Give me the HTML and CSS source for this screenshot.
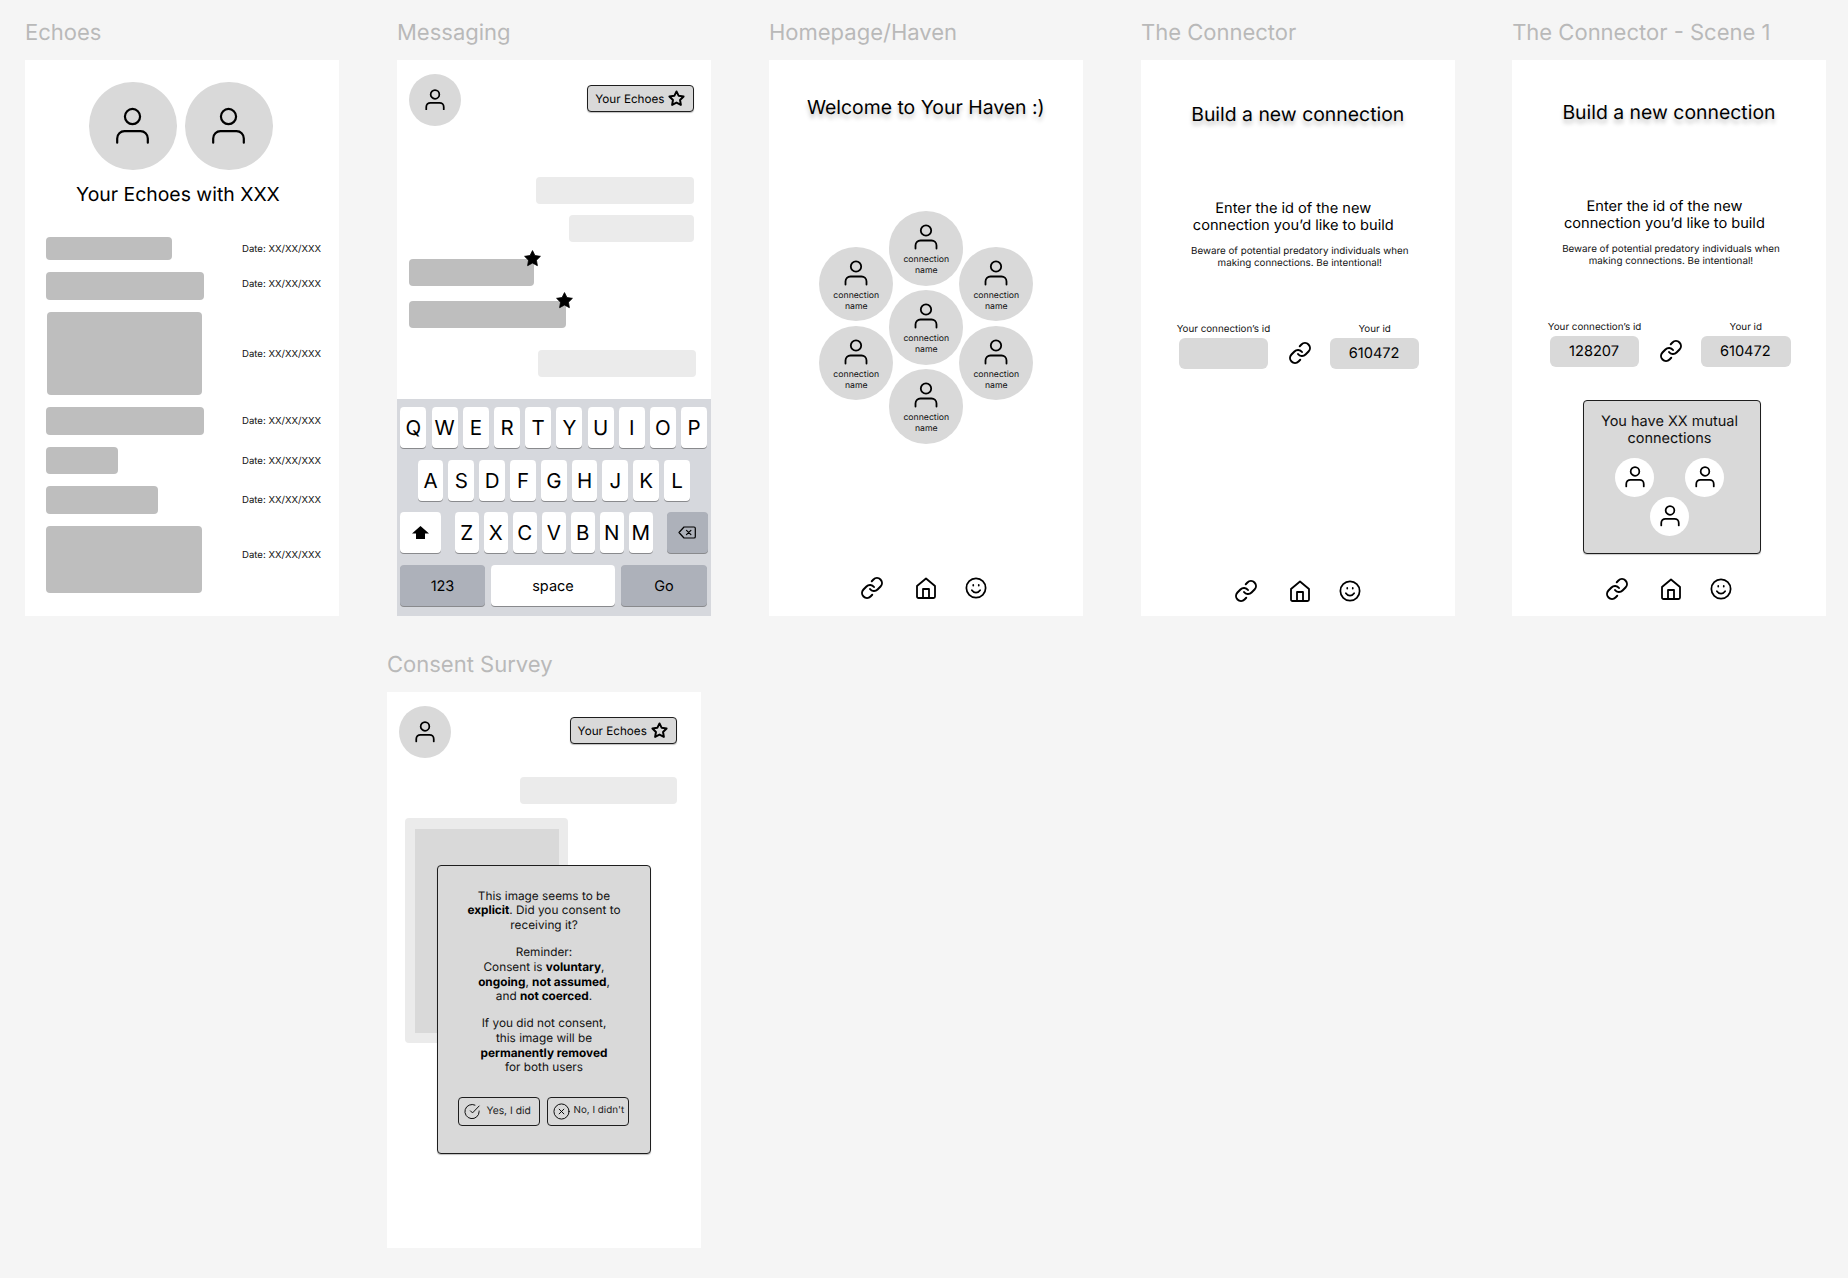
FILE: index.html
```html
<!DOCTYPE html>
<html lang="en">
<head>
<meta charset="utf-8">
<title>Echoes wireframes</title>
<link rel="stylesheet" href="styles.css">
</head>
<body>
<svg class="defs" width="0" height="0" aria-hidden="true">
  <symbol id="person" viewBox="0 0 24 26"><circle cx="12" cy="6.5" r="5.2"/><path d="M1.5 24.5v-3a5 5 0 0 1 5-5h11a5 5 0 0 1 5 5v3"/></symbol>
  <symbol id="link" viewBox="0 0 24 24"><path d="M10 13a5 5 0 0 0 7.54.54l3-3a5 5 0 0 0-7.07-7.07l-1.72 1.71"/><path d="M14 11a5 5 0 0 0-7.54-.54l-3 3a5 5 0 0 0 7.07 7.07l1.71-1.71"/></symbol>
  <symbol id="home" viewBox="0 0 20 22"><path d="M1 19.5V9L10 1.5 19 9v10.5a1.5 1.5 0 0 1-1.500 1.500H2.500A1.500 1.500 0 0 1 1 19.500z"/><path d="M7 21v-9h6v9"/></symbol>
  <symbol id="smile" viewBox="0 0 24 24"><circle cx="12" cy="12" r="10.500"/><path d="M7.500 14.500s1.700 2.500 4.500 2.500 4.500-2.500 4.500-2.500"/><path class="dot" d="M9 8.700v.6M15 8.700v.6"/></symbol>
  <symbol id="star" viewBox="0 0 24 24"><path d="M12 2l3.090 6.260L22 9.270l-5 4.870 1.180 6.880L12 17.770l-6.180 3.250L7 14.140 2 9.270l6.910-1.010L12 2z"/></symbol>
  <symbol id="check" viewBox="0 0 18 18"><path d="M16 8.500V9a7.500 7.500 0 1 1-4.400-6.800"/><path d="M16 3.200L9 10.500 6.800 8.300"/></symbol>
  <symbol id="cross" viewBox="0 0 18 18"><circle cx="9" cy="9" r="8"/><path d="M6.500 6.500l5 5M11.500 6.500l-5 5"/></symbol>
  <symbol id="del" viewBox="0 0 18 13"><path d="M6 1h10a1.300 1.300 0 0 1 1.300 1.300v8.400A1.300 1.300 0 0 1 16 12H6L1 6.500z"/><path d="M8.500 4.300l4.400 4.400M12.900 4.300l-4.400 4.400"/></symbol>
</svg>

<div class="row-top">
  <section class="board">
    <h2 class="label">Echoes</h2>
    <div class="frame echoes">
      <div class="duo">
        <div class="avatar avatar-lg"><svg class="ico ico-person-lg"><use href="#person"/></svg></div>
        <div class="avatar avatar-lg"><svg class="ico ico-person-lg"><use href="#person"/></svg></div>
      </div>
      <p class="echoes-title">Your Echoes with XXX</p>
      <div class="echo-list">
        <div class="echo-row"><div class="bar h-23" style="width:126px"></div><span class="date">Date: XX/XX/XXX</span></div>
        <div class="echo-row"><div class="bar h-28" style="width:158px"></div><span class="date date-up3">Date: XX/XX/XXX</span></div>
        <div class="echo-row"><div class="bar h-83 nudge" style="width:155px"></div><span class="date">Date: XX/XX/XXX</span></div>
        <div class="echo-row"><div class="bar h-28" style="width:158px"></div><span class="date">Date: XX/XX/XXX</span></div>
        <div class="echo-row"><div class="bar h-28" style="width:72px"></div><span class="date">Date: XX/XX/XXX</span></div>
        <div class="echo-row"><div class="bar h-28" style="width:112px"></div><span class="date">Date: XX/XX/XXX</span></div>
        <div class="echo-row"><div class="bar h-67" style="width:156px"></div><span class="date date-up6">Date: XX/XX/XXX</span></div>
      </div>
    </div>
  </section>

  <section class="board">
    <h2 class="label">Messaging</h2>
    <div class="frame messaging">
      <header class="chat-head">
        <div class="avatar avatar-md"><svg class="ico ico-person-sm"><use href="#person"/></svg></div>
        <div class="echo-btn">Your Echoes <svg class="ico ico-star"><use href="#star"/></svg></div>
      </header>
      <div class="thread">
        <div class="bubble out" style="width:158px"></div>
        <div class="bubble out second-out" style="width:125px"></div>
        <div class="bubble in first-in" style="width:125px"><svg class="badge-star"><use href="#star"/></svg></div>
        <div class="bubble in second-in" style="width:157px"><svg class="badge-star"><use href="#star"/></svg></div>
        <div class="bubble out last-out" style="width:158px"></div>
      </div>
      <div class="keyboard">
        <div class="kb-row">
          <span class="key">Q</span><span class="key">W</span><span class="key">E</span><span class="key">R</span><span class="key">T</span><span class="key">Y</span><span class="key">U</span><span class="key">I</span><span class="key">O</span><span class="key">P</span>
        </div>
        <div class="kb-row kb-row-2">
          <span class="key">A</span><span class="key">S</span><span class="key">D</span><span class="key">F</span><span class="key">G</span><span class="key">H</span><span class="key">J</span><span class="key">K</span><span class="key">L</span>
        </div>
        <div class="kb-row kb-row-3">
          <span class="key key-wide"><svg class="shift" viewBox="0 0 17 13"><path d="M8.500 0L17 7.500h-4V13H4V7.500H0z"/></svg></span>
          <div class="kb-letters"><span class="key">Z</span><span class="key">X</span><span class="key">C</span><span class="key">V</span><span class="key">B</span><span class="key">N</span><span class="key">M</span></div>
          <span class="key key-wide key-dark"><svg class="ico ico-del"><use href="#del"/></svg></span>
        </div>
        <div class="kb-row kb-row-4">
          <span class="key key-txt key-dark key-123">123</span><span class="key key-txt key-space">space</span><span class="key key-txt key-dark key-go">Go</span>
        </div>
      </div>
    </div>
  </section>

  <section class="board">
    <h2 class="label">Homepage/Haven</h2>
    <div class="frame haven">
      <p class="heading haven-title">Welcome to Your Haven :)</p>
      <div class="comb">
        <div class="comb-col comb-side">
          <div class="bloom"><svg class="ico ico-person-md"><use href="#person"/></svg><span>connection<br>name</span></div>
          <div class="bloom"><svg class="ico ico-person-md"><use href="#person"/></svg><span>connection<br>name</span></div>
        </div>
        <div class="comb-col">
          <div class="bloom"><svg class="ico ico-person-md"><use href="#person"/></svg><span>connection<br>name</span></div>
          <div class="bloom"><svg class="ico ico-person-md"><use href="#person"/></svg><span>connection<br>name</span></div>
          <div class="bloom"><svg class="ico ico-person-md"><use href="#person"/></svg><span>connection<br>name</span></div>
        </div>
        <div class="comb-col comb-side">
          <div class="bloom"><svg class="ico ico-person-md"><use href="#person"/></svg><span>connection<br>name</span></div>
          <div class="bloom"><svg class="ico ico-person-md"><use href="#person"/></svg><span>connection<br>name</span></div>
        </div>
      </div>
      <nav class="tabbar tab-haven">
        <svg class="ico ico-link"><use href="#link"/></svg>
        <svg class="ico ico-home"><use href="#home"/></svg>
        <svg class="ico ico-smile"><use href="#smile"/></svg>
      </nav>
    </div>
  </section>

  <section class="board">
    <h2 class="label">The Connector</h2>
    <div class="frame connector">
      <p class="heading">Build a new connection</p>
      <p class="enter">Enter the id of the new<br>connection you’d like to build</p>
      <p class="beware">Beware of potential predatory individuals when<br>making connections. Be intentional!</p>
      <div class="ids">
        <div class="id-col"><span class="id-label">Your connection’s id</span><div class="id-box"></div></div>
        <svg class="ico ico-link id-link"><use href="#link"/></svg>
        <div class="id-col"><span class="id-label">Your id</span><div class="id-box">610472</div></div>
      </div>
      <nav class="tabbar tab-connector">
        <svg class="ico ico-link"><use href="#link"/></svg>
        <svg class="ico ico-home"><use href="#home"/></svg>
        <svg class="ico ico-smile"><use href="#smile"/></svg>
      </nav>
    </div>
  </section>

  <section class="board board-last">
    <h2 class="label">The Connector - Scene 1</h2>
    <div class="frame connector scene">
      <p class="heading">Build a new connection</p>
      <p class="enter">Enter the id of the new<br>connection you’d like to build</p>
      <p class="beware">Beware of potential predatory individuals when<br>making connections. Be intentional!</p>
      <div class="ids">
        <div class="id-col"><span class="id-label">Your connection’s id</span><div class="id-box">128207</div></div>
        <svg class="ico ico-link id-link"><use href="#link"/></svg>
        <div class="id-col"><span class="id-label">Your id</span><div class="id-box">610472</div></div>
      </div>
      <div class="mutual">
        <p class="mutual-text">You have XX mutual<br>connections</p>
        <div class="mutual-people">
          <div class="avatar avatar-sm"><svg class="ico ico-person-sm"><use href="#person"/></svg></div>
          <div class="avatar avatar-sm"><svg class="ico ico-person-sm"><use href="#person"/></svg></div>
          <div class="avatar avatar-sm"><svg class="ico ico-person-sm"><use href="#person"/></svg></div>
        </div>
      </div>
      <nav class="tabbar tab-scene">
        <svg class="ico ico-link"><use href="#link"/></svg>
        <svg class="ico ico-home"><use href="#home"/></svg>
        <svg class="ico ico-smile"><use href="#smile"/></svg>
      </nav>
    </div>
  </section>
</div>

<div class="row-bottom">
  <section class="board">
    <h2 class="label">Consent Survey</h2>
    <div class="frame consent">
      <header class="chat-head">
        <div class="avatar avatar-md"><svg class="ico ico-person-sm"><use href="#person"/></svg></div>
        <div class="echo-btn">Your Echoes <svg class="ico ico-star"><use href="#star"/></svg></div>
      </header>
      <div class="bubble out consent-bubble" style="width:157px"></div>
      <div class="photo"><div class="photo-inner"></div></div>
      <div class="modal">
        <p>This image seems to be<br><b>explicit</b>. Did you consent to<br>receiving it?</p>
        <p>Reminder:<br>Consent is <b>voluntary</b>,<br><b>ongoing</b>, <b>not assumed</b>,<br>and <b>not coerced</b>.</p>
        <p>If you did not consent,<br>this image will be<br><b>permanently removed</b><br>for both users</p>
        <div class="choices">
          <div class="choice"><svg class="ico ico-choice"><use href="#check"/></svg>Yes, I did</div>
          <div class="choice choice-no"><svg class="ico ico-choice"><use href="#cross"/></svg>No, I didn't</div>
        </div>
      </div>
    </div>
  </section>
</div>
</body>
</html>
```
FILE: styles.css
```css
* { box-sizing: border-box; }
html, body { margin: 0; padding: 0; }
body {
  width: 1848px;
  height: 1278px;
  overflow: hidden;
  padding: 19px 0 0 25px;
  background: #f5f5f5;
  color: #000;
  font-family: Inter, "Liberation Sans", sans-serif;
  text-rendering: geometricPrecision;
}
p, h2 { margin: 0; font-weight: 400; }
.defs { position: absolute; }

.row-top { display: flex; gap: 58.4px; }
.row-bottom { display: flex; margin: 34.6px 0 0 362px; }

.board { width: 313.6px; flex: none; }
.board-last { margin-left: -0.8px; }
.label {
  height: 28px;
  margin-bottom: 13px;
  font-size: 22px;
  line-height: 28px;
  color: #b9b9b9;
  white-space: nowrap;
}
.frame {
  position: relative;
  display: flex;
  flex-direction: column;
  width: 313.6px;
  height: 556px;
  background: #fff;
  overflow: hidden;
}

.ico { display: block; flex: none; fill: none; stroke: #000; stroke-width: 2; stroke-linecap: round; stroke-linejoin: round; }
.ico-person-lg { width: 35px; height: 38px; stroke-width: 1.500; }
.ico-person-md { width: 24px; height: 26px; stroke-width: 1.800; }
.ico-person-sm { width: 20px; height: 21.700px; stroke-width: 2.100; }
.ico-link { width: 24px; height: 24px; }
.ico-home { width: 20px; height: 22px; stroke-width: 1.800; }
.ico-smile { width: 22px; height: 22px; stroke-width: 1.900; }
.ico-star { width: 17px; height: 17px; stroke-width: 2.800; }
.ico-choice { width: 17px; height: 17px; stroke-width: 1; }
.ico-del { width: 18px; height: 13px; stroke-width: 1.200; }

.avatar { display: flex; align-items: center; justify-content: center; border-radius: 50%; background: #d9d9d9; flex: none; }
.avatar-lg { width: 87.400px; height: 87.400px; }
.avatar-md { width: 52px; height: 52px; }
.avatar-sm { width: 39px; height: 39px; background: #fff; }

/* Echoes */
.echoes { padding: 22.400px 0 0 21px; }
.duo { display: flex; gap: 8.600px; margin-left: 43.300px; }
.echoes-title { margin: 12.600px 0 0 30px; font-size: 19.400px; line-height: 24px; white-space: nowrap; }
.echo-list { display: flex; flex-direction: column; gap: 12.100px; margin-top: 31px; }
.echo-row { display: grid; grid-template-columns: 196px auto; align-items: center; }
.bar { border-radius: 4px; background: #bebebe; justify-self: start; }
.h-23 { height: 23px; }
.h-28 { height: 27.500px; }
.h-83 { height: 83px; }
.h-67 { height: 66.600px; }
.nudge { margin-left: 1px; }
.date { padding-top: 2px; font-size: 9.600px; line-height: 12px; color: #111; white-space: nowrap; }
.date-up3 { padding: 0 0 2px; }
.date-up6 { padding: 0 0 6px; }

/* Chat header */
.chat-head { display: flex; align-items: center; justify-content: space-between; padding: 13.500px 16.300px 0 12px; }
.echo-btn {
  display: flex;
  align-items: center;
  justify-content: space-between;
  width: 107px;
  height: 27px;
  margin-bottom: 2px;
  padding: 0 8px 0 7px;
  border: 1px solid #1e1e1e;
  border-radius: 4px;
  background: #d9d9d9;
  box-shadow: 0 1px 1px rgba(0,0,0,.25);
  font-size: 11.700px;
  white-space: nowrap;
}

/* Bubbles */
.thread { display: flex; flex-direction: column; padding: 51.300px 16.300px 0 12px; }
.bubble { position: relative; height: 27px; border-radius: 4px; }
.out { background: #ebebeb; align-self: flex-end; }
.in { background: #bebebe; align-self: flex-start; }
.second-out { margin-top: 11.400px; }
.first-in { margin-top: 17px; }
.second-in { margin-top: 15px; }
.last-out { margin-top: 22px; margin-right: -2px; }
.badge-star {
  position: absolute;
  right: -8.500px;
  top: -10px;
  width: 19px;
  height: 19px;
  fill: #000;
  stroke: #000;
  stroke-width: 1;
  stroke-linejoin: round;
}

/* Keyboard */
.keyboard {
  display: flex;
  flex-direction: column;
  gap: 11.700px;
  height: 217.200px;
  margin-top: auto;
  padding: 8.200px 3px 0;
  background: #d6d8dd;
}
.kb-row { display: flex; gap: 5.200px; justify-content: center; }
.kb-row-2 { gap: 5px; }
.kb-row-3 { justify-content: space-between; }
.kb-row-4 { gap: 6px; justify-content: flex-start; }
.kb-letters { display: flex; gap: 5px; }
.key {
  display: flex;
  align-items: center;
  justify-content: center;
  flex: none;
  width: 26px;
  height: 41px;
  border-radius: 4px;
  background: #fff;
  box-shadow: 0 1px 0 #898a8d;
  font-size: 20.500px;
}
.kb-row-2 .key { width: 25.800px; }
.kb-letters .key { width: 24px; }
.key-wide { width: 41px; }
.key-dark { background: #adb1ba; }
.key-txt { padding-top: 1px; font-size: 14.500px; }
.key-123 { width: 85px; }
.key-space { width: 124px; }
.key-go { width: 86px; }
.shift { width: 17px; height: 13px; fill: #000; }

/* Haven */
.heading { font-size: 19.400px; line-height: 24px; text-align: center; white-space: nowrap; text-shadow: 0 4px 4px rgba(0,0,0,.25); }
.haven { padding-top: 35px; }
.comb { display: flex; justify-content: center; margin: 92.400px 0 0 1px; }
.comb-col { display: flex; flex-direction: column; gap: 4.600px; flex: none; margin: 0 -2.200px; }
.comb-side { margin-top: 35.600px; }
.bloom {
  display: flex;
  flex-direction: column;
  align-items: center;
  width: 74.400px;
  height: 74.400px;
  padding-top: 13px;
  border-radius: 50%;
  background: #d9d9d9;
  font-size: 8.700px;
  line-height: 10.600px;
  text-align: center;
  color: #111;
}
.bloom span { margin-top: 5px; }

/* Tab bar */
.tabbar { display: flex; align-items: center; margin-top: auto; }
.tabbar .ico-link { margin-right: 31.700px; }
.tabbar .ico-home { margin-right: 29px; }
.tab-haven { padding: 0 0 16px 91px; }
.tab-connector { padding: 0 0 13px 93px; }
.tab-scene { padding: 0 0 14.600px 93px; }

/* Connector */
.connector { padding-top: 41.500px; }
.enter { margin-top: 74.200px; padding-right: 9px; font-size: 14.600px; line-height: 17.600px; text-align: center; white-space: nowrap; }
.beware { margin-top: 11.100px; padding-left: 4px; font-size: 9.800px; line-height: 12px; text-align: center; white-space: nowrap; color: #111; }
.ids { display: grid; grid-template-columns: 89.500px 1fr 89.500px; align-items: end; margin-top: 53.600px; padding: 0 35.200px 0 37.700px; }
.id-col { display: flex; flex-direction: column; align-items: center; gap: 2.400px; }
.id-label { font-size: 9.800px; line-height: 12px; white-space: nowrap; color: #111; }
.id-box { display: flex; align-items: center; justify-content: center; width: 89.500px; height: 31px; padding-right: 1px; border-radius: 6px; background: #d9d9d9; font-size: 14.600px; }
.id-link { justify-self: center; margin: 0 0 3.500px 2px; }
.scene { padding-top: 39.500px; }
.mutual { width: 177.700px; height: 154.300px; margin: 33px 0 0 71px; padding-top: 11.600px; border: 1px solid #1e1e1e; border-radius: 4px; background: #d9d9d9; box-shadow: 0 1px 1px rgba(0,0,0,.2); }
.mutual-text { padding-right: 5px; font-size: 14.500px; line-height: 17.600px; text-align: center; color: #111; }
.mutual-people { display: flex; flex-wrap: wrap; justify-content: center; column-gap: 31.300px; width: 109.300px; margin: 10px 0 0 31px; }

/* Consent */
.consent-bubble { margin: 19px 24px 0 0; height: 27px; }
.consent .chat-head { padding: 14.300px 24px 0 12px; }
.photo { width: 163.300px; height: 225px; margin: 13.800px 0 0 18px; padding: 11.800px 9.700px 9.800px; border-radius: 4px; background: #ebebeb; }
.photo-inner { height: 100%; background: #d9d9d9; }
.modal {
  position: absolute;
  left: 50.300px;
  top: 173px;
  width: 213.400px;
  height: 289.600px;
  padding-top: 23px;
  border: 1px solid #1e1e1e;
  border-radius: 4px;
  background: #d9d9d9;
  box-shadow: 0 1px 1px rgba(0,0,0,.25);
  font-size: 11.800px;
  line-height: 14.700px;
  text-align: center;
  color: #111;
}
.modal p + p { margin-top: 12.400px; }
.modal b { font-weight: 700; color: #000; }
.choices { display: flex; gap: 7.300px; margin: 22px 0 0 19.700px; }
.choice {
  display: flex;
  align-items: center;
  gap: 5px;
  width: 81.800px;
  height: 29px;
  padding-left: 5.500px;
  border: 1px solid #1e1e1e;
  border-radius: 4px;
  font-size: 10.300px;
  white-space: nowrap;
  color: #222;
}
.choice-no { gap: 4px; padding-left: 4.500px; font-size: 9.800px; }
```
